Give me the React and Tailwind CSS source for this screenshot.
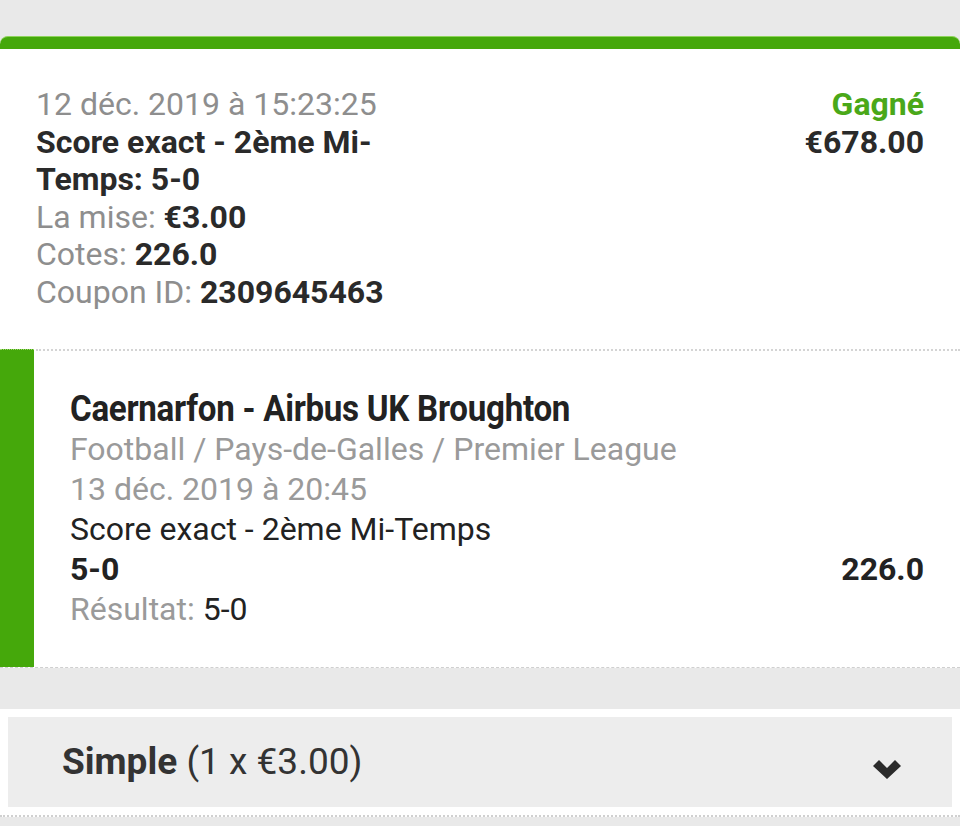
import React from 'react';

const Row = ({ label, value }) => (
  <div>
    <span className="text-[#8e8e8e]">{label}</span>{' '}
    <span className="font-bold text-[#2a2a2a]">{value}</span>
  </div>
);

const App = () => {
  return (
    <div className="min-h-[826px] bg-[#e9e9e9] pt-[36px] font-['Roboto',sans-serif]">
      {/* green top strip */}
      <div className="h-[13px] rounded-t-[8px] bg-[#45a80b] border-t border-[#8fd45c]" />

      <div className="bg-white border-b border-dashed border-[#cfcfcf]">
        {/* coupon header */}
        <div className="flex justify-between px-[36px] pt-[37px] pb-[38px] text-[32px] leading-[37.5px]">
          <div className="w-[400px]">
            <div className="text-[#8e8e8e]">12 déc. 2019 à 15:23:25</div>
            <div className="font-bold text-[#2a2a2a]">Score exact - 2ème Mi-Temps: 5-0</div>
            <Row label="La mise:" value="€3.00" />
            <Row label="Cotes:" value="226.0" />
            <Row label="Coupon ID:" value="2309645463" />
          </div>
          <div className="text-right font-bold">
            <div className="text-[#4aa819]">Gagné</div>
            <div className="text-[#2a2a2a]">€678.00</div>
          </div>
        </div>

        {/* selection */}
        <div className="flex">
          <div className="w-[34px] bg-[#45a80b] border-t border-dotted border-[#9bd46e]" />
          <div className="flex-1 ml-[2px] border-t-2 border-dotted border-[#d4d4d4] pl-[34px] pr-[36px] pt-[38px] pb-[38px] text-[32px] leading-[40px]">
            <div className="font-bold text-[#222] text-[36px] tracking-[-0.3px]">
              <span className="inline-block origin-left scale-x-[0.92] whitespace-nowrap">Caernarfon - Airbus UK Broughton</span>
            </div>
            <div className="text-[#9a9a9a]">Football / Pays-de-Galles / Premier League</div>
            <div className="text-[#9a9a9a]">13 déc. 2019 à 20:45</div>
            <div className="text-[#222]">Score exact - 2ème Mi-Temps</div>
            <div className="flex justify-between font-bold text-[#222]">
              <span>5-0</span>
              <span>226.0</span>
            </div>
            <div>
              <span className="text-[#9a9a9a]">Résultat:</span>{' '}
              <span className="text-[#222]">5-0</span>
            </div>
          </div>
        </div>
      </div>

      <div className="h-[41px]" />

      {/* bet type */}
      <div className="bg-white pt-[8px] pb-[8px] px-[8px] border-b-2 border-dotted border-[#d0d0d0]">
        <div className="flex items-center justify-between h-[90px] bg-[#ededed] pl-[54px] pr-[50px]">
          <div className="text-[37px] text-[#333]">
            <span className="font-bold">Simple</span> (1 x €3.00)
          </div>
          <svg className="mt-[14px]" width="30" height="21" viewBox="0 0 30 21">
            <path d="M1 7 L7 1 L15 9 L23 1 L29 7 L15 20 Z" fill="#2b2b2b" />
          </svg>
        </div>
      </div>
    </div>
  );
};

export default App;
